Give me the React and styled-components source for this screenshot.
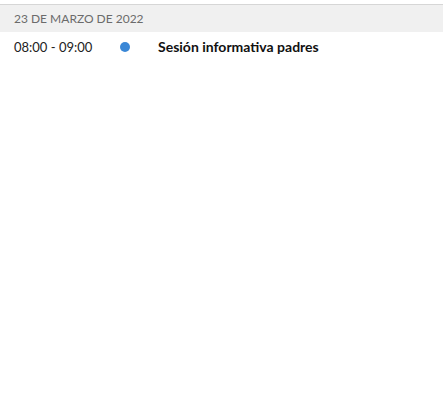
import React from 'react';
import styled, { createGlobalStyle } from 'styled-components';

const GlobalStyle = createGlobalStyle`
  html, body {
    margin: 0;
    padding: 0;
    background: #ffffff;
    font-family: Lato, "Open Sans", sans-serif;
  }
`;

const Agenda = styled.div`
  width: 443px;
  height: 395px;
  padding-top: 4px;
  box-sizing: border-box;
  background: #ffffff;
`;

const DayHeader = styled.div`
  height: 27px;
  border-top: 1px solid #d6d6d6;
  background: #f0f0f0;
  display: flex;
  align-items: center;
  padding-left: 14px;
  font-size: 12px;
  color: #6b6b6b;
  text-transform: uppercase;
`;

const EventRow = styled.div`
  display: grid;
  grid-template-columns: 106px 38px 1fr;
  align-items: center;
  padding: 6px 14px;
  font-size: 13px;
  color: #1e1e1e;
`;

const Time = styled.div`
  color: #222222;
`;

const Dot = styled.span`
  width: 10px;
  height: 10px;
  border-radius: 50%;
  background: ${p => p.color};
`;

const Title = styled.div`
  font-size: 14px;
  font-weight: bold;
  color: #111111;
`;

const events = [
  { time: '08:00 - 09:00', color: '#3a87d6', title: 'Sesión informativa padres' }
];

export default function App() {
  return (
    <Agenda>
      <GlobalStyle />
      <DayHeader>23 de marzo de 2022</DayHeader>
      {events.map((e, i) => (
        <EventRow key={i}>
          <Time>{e.time}</Time>
          <Dot color={e.color} />
          <Title>{e.title}</Title>
        </EventRow>
      ))}
    </Agenda>
  );
}
